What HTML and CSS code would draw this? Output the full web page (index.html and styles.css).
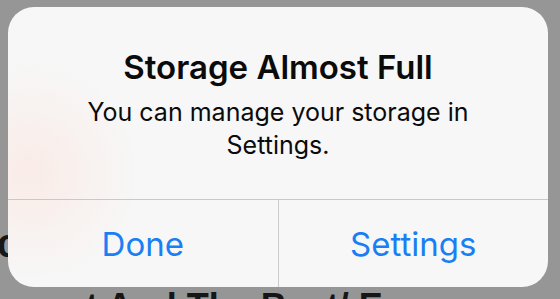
FILE: index.html
```html
<!DOCTYPE html>
<html>
<head>
<meta charset="utf-8">
<link rel="stylesheet" href="styles.css">
</head>
<body>
<div class="backdrop">
  <div class="tag"><span>e</span></div>
  <div class="headline">Yc</div>
  <div class="subline">ct And The Beat/ E</div>
</div>
<div class="alert">
  <div class="alert-body">
    <div class="alert-title">Storage Almost Full</div>
    <div class="alert-message">You can manage your storage in<br>Settings.</div>
  </div>
  <div class="alert-actions">
    <div class="alert-btn">Done</div>
    <div class="alert-btn">Settings</div>
  </div>
</div>
</body>
</html>
```
FILE: styles.css
```css
html, body {
  margin: 0;
  padding: 0;
}
body {
  width: 560px;
  height: 299px;
  overflow: hidden;
  background: #969696;
  position: relative;
  font-family: "Inter", "Liberation Sans", sans-serif;
}
.backdrop {
  display: flex;
  flex-direction: column;
  height: 299px;
  overflow: hidden;
}
.tag {
  margin-top: 140px;
  width: 8px;
  height: 39px;
  background: #b7391a;
  overflow: hidden;
  color: #f3d6cc;
  font-size: 22px;
  line-height: 39px;
}
.tag span {
  display: block;
  margin-left: -5px;
}
.headline {
  margin-top: 80px;
  margin-left: -30px;
  font-family: "Liberation Sans", sans-serif;
  font-weight: bold;
  font-size: 40px;
  line-height: 46px;
  color: #161616;
}
.subline {
  margin-top: 20px;
  margin-left: 66px;
  font-family: "Liberation Sans", sans-serif;
  font-weight: bold;
  font-size: 36px;
  line-height: 42px;
  color: #161616;
  white-space: nowrap;
}
.alert {
  position: absolute;
  left: 8px;
  top: 7px;
  width: 540px;
  height: 280px;
  border-radius: 26px;
  overflow: hidden;
  background:
    radial-gradient(circle at 22px 165px, rgba(255, 214, 200, 0.35), rgba(255, 214, 200, 0) 110px),
    #f7f7f7;
  display: flex;
  flex-direction: column;
}
.alert-body {
  height: 192px;
  box-sizing: border-box;
  padding-top: 41px;
  text-align: center;
  color: #0b0b0b;
}
.alert-title {
  font-size: 33px;
  line-height: 38px;
  font-weight: 600;
}
.alert-message {
  margin-top: 10px;
  font-size: 25px;
  line-height: 33px;
}
.alert-actions {
  flex: 1;
  display: flex;
  border-top: 1px solid #cbc8c8;
}
.alert-btn {
  flex: 1;
  display: flex;
  align-items: center;
  justify-content: center;
  font-size: 33px;
  color: #1a7ef4;
}
.alert-btn + .alert-btn {
  border-left: 1px solid #cbcbcb;
}
```
